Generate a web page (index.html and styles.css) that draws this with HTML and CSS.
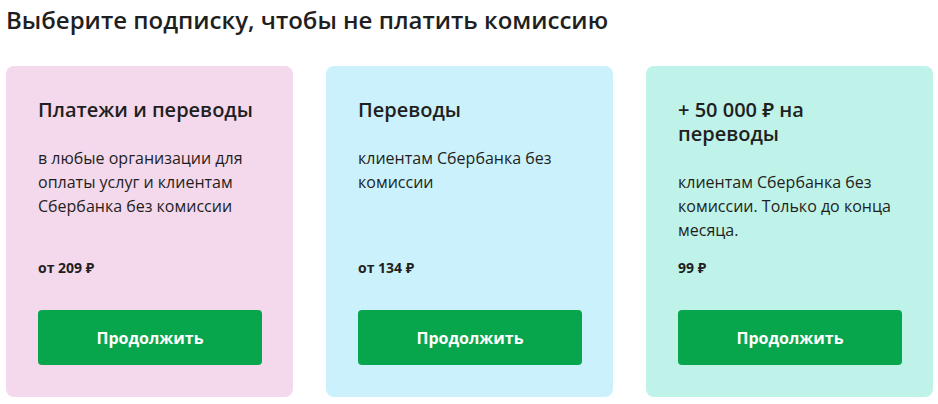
FILE: index.html
```html
<!DOCTYPE html>
<html lang="ru">
<head>
<meta charset="utf-8">
<link rel="stylesheet" href="styles.css">
</head>
<body>
<h1 class="page-title">Выберите подписку, чтобы не платить комиссию</h1>
<div class="cards">
  <div class="card card-pink">
    <h2 class="card-title">Платежи и переводы</h2>
    <p class="card-text">в любые организации для оплаты услуг и клиентам Сбербанка без комиссии</p>
    <div class="card-price">от 209 ₽</div>
    <button class="btn">Продолжить</button>
  </div>
  <div class="card card-blue">
    <h2 class="card-title">Переводы</h2>
    <p class="card-text">клиентам Сбербанка без комиссии</p>
    <div class="card-price">от 134 ₽</div>
    <button class="btn">Продолжить</button>
  </div>
  <div class="card card-mint">
    <h2 class="card-title card-title-narrow">+ 50 000 ₽ на переводы</h2>
    <p class="card-text">клиентам Сбербанка без комиссии. Только до конца месяца.</p>
    <div class="card-price">99 ₽</div>
    <button class="btn">Продолжить</button>
  </div>
</div>
</body>
</html>
```
FILE: styles.css
```css
* { box-sizing: border-box; }
html, body { margin: 0; padding: 0; background: #fff; }
body {
  font-family: "Open Sans", "Noto Sans", sans-serif;
  color: #1f1f22;
  padding: 4px 6px 0 6px;
  width: 938px;
}
.page-title {
  margin: 0;
  font-size: 24px;
  font-weight: 600;
  line-height: 32px;
  color: #1f1f22;
}
.cards {
  margin-top: 30px;
  display: grid;
  grid-template-columns: repeat(3, 287px);
  gap: 33px;
}
.card {
  height: 331px;
  border-radius: 8px;
  padding: 32px 32px 32px 32px;
  display: flex;
  flex-direction: column;
}
.card-pink { background: #f4d8ec; }
.card-blue { background: #cbf2fc; }
.card-mint { background: #bff2e8; }
.card-title {
  margin: 0;
  font-size: 20px;
  font-weight: 600;
  line-height: 24px;
}
.card-title-narrow { width: 170px; }
.card-text {
  margin: 24px 0 0 0;
  font-size: 16px;
  line-height: 24px;
  font-weight: 400;
}
.card-price {
  margin-top: auto;
  font-size: 14px;
  font-weight: 700;
  line-height: 20px;
}
.btn {
  margin-top: 32px;
  width: 224px;
  height: 55px;
  border: none;
  border-radius: 4px;
  background: #08a64c;
  color: #fff;
  font-family: inherit;
  font-size: 16px;
  font-weight: 700;
}
```
